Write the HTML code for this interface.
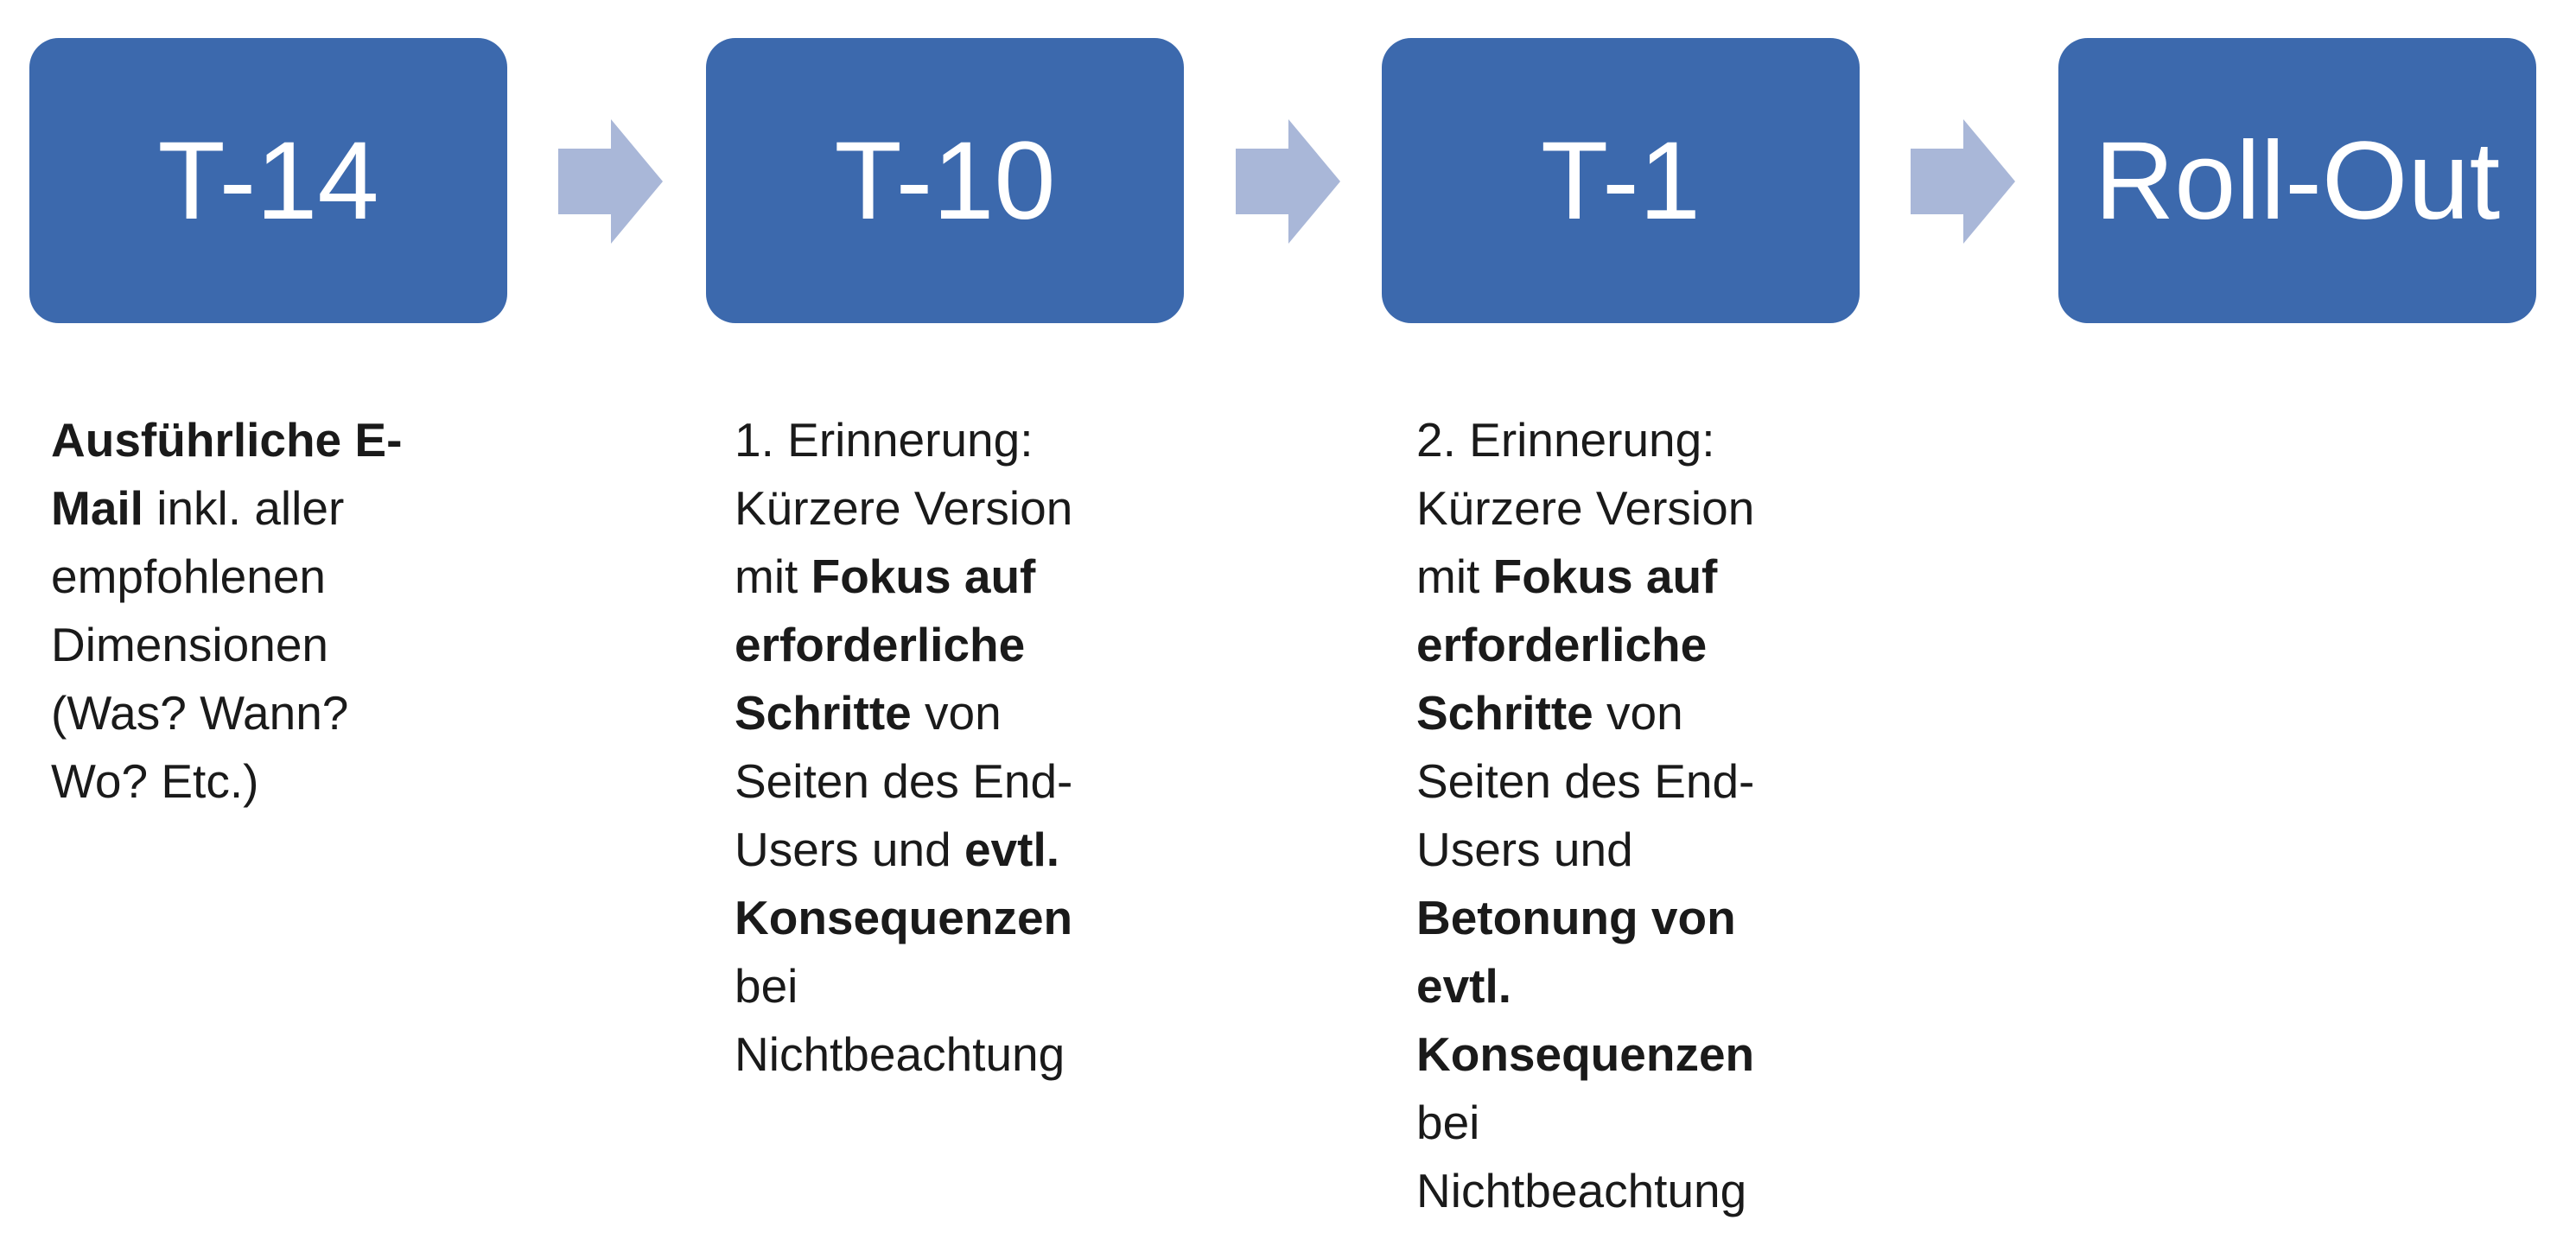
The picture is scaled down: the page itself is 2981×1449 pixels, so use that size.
<!DOCTYPE html>
<html><head><meta charset="utf-8"><style>
html,body{margin:0;padding:0;background:#fff;}
body{width:2981px;height:1449px;position:relative;overflow:hidden;font-family:"Liberation Sans",sans-serif;}
.box{position:absolute;top:44px;width:553px;height:330px;background:#3c69ad;border-radius:34px;color:#fff;font-size:128px;display:flex;align-items:center;justify-content:center;}
.arr{position:absolute;top:138px;}
.txt{position:absolute;top:470px;font-size:55px;line-height:79px;color:#1a1a1a;white-space:nowrap;}
b{font-weight:bold;}
</style></head><body>
<div class="box" style="left:34px">T-14</div>
<div class="box" style="left:817px">T-10</div>
<div class="box" style="left:1599px">T-1</div>
<div class="box" style="left:2382px">Roll-Out</div>
<svg class="arr" style="left:646px" width="122" height="144"><polygon points="0,34 61,34 61,0 121,72 61,144 61,110 0,110" fill="#a9b7d8"/></svg>
<svg class="arr" style="left:1430px" width="122" height="144"><polygon points="0,34 61,34 61,0 121,72 61,144 61,110 0,110" fill="#a9b7d8"/></svg>
<svg class="arr" style="left:2211px" width="122" height="144"><polygon points="0,34 61,34 61,0 121,72 61,144 61,110 0,110" fill="#a9b7d8"/></svg>
<div class="txt" style="left:59px"><b>Ausführliche E-</b><br><b>Mail</b> inkl. aller<br>empfohlenen<br>Dimensionen<br>(Was? Wann?<br>Wo? Etc.)</div>
<div class="txt" style="left:850px">1. Erinnerung:<br>Kürzere Version<br>mit <b>Fokus auf</b><br><b>erforderliche</b><br><b>Schritte</b> von<br>Seiten des End-<br>Users und <b>evtl.</b><br><b>Konsequenzen</b><br>bei<br>Nichtbeachtung</div>
<div class="txt" style="left:1639px">2. Erinnerung:<br>Kürzere Version<br>mit <b>Fokus auf</b><br><b>erforderliche</b><br><b>Schritte</b> von<br>Seiten des End-<br>Users und<br><b>Betonung von</b><br><b>evtl.</b><br><b>Konsequenzen</b><br>bei<br>Nichtbeachtung</div>
</body></html>
